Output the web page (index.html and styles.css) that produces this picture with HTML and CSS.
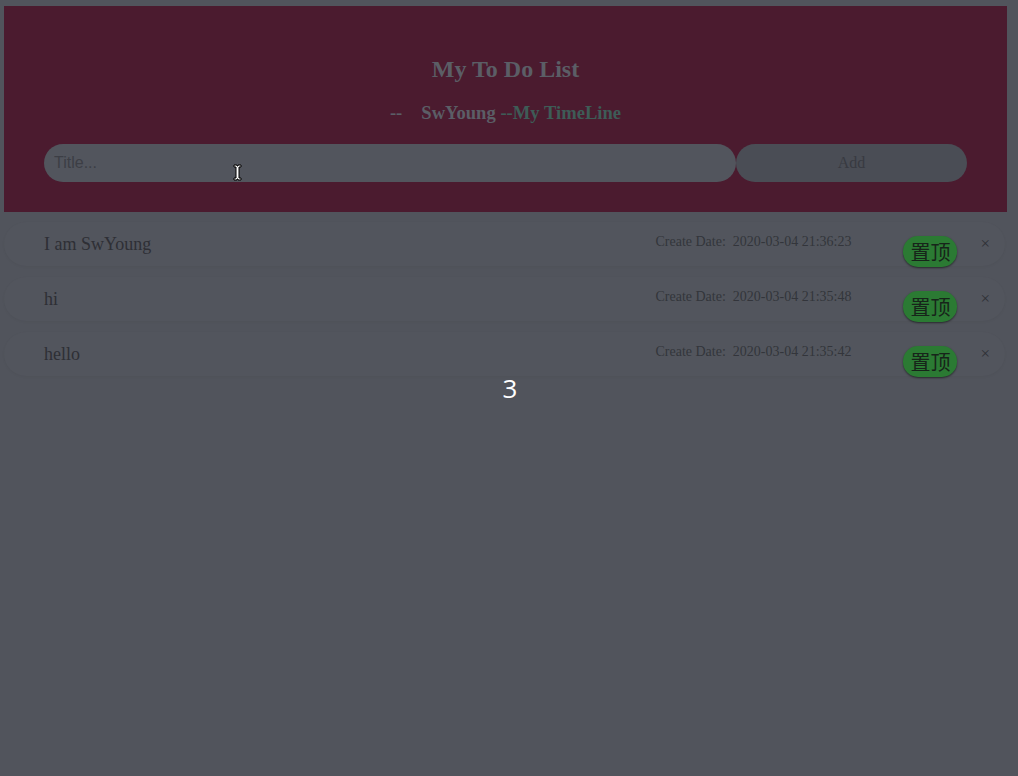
FILE: index.html
```html
<!DOCTYPE html>
<html>
<head>
<meta charset="utf-8">
<link rel="stylesheet" href="styles.css">
</head>
<body>
<div class="page">
  <header class="header">
    <h1 class="title">My To Do List</h1>
    <h3 class="subtitle"><span class="dash">--</span><span class="author">SwYoung</span> <span class="tl">--My TimeLine</span></h3>
    <form class="add-form">
      <div class="input-wrap">
        <input class="title-input" type="text" placeholder="Title...">
        <svg class="cursor" width="9" height="17" viewBox="0 0 9 17"><path d="M1 1h3v1h1V1h3v2H6v11h2v2H5v-1H4v1H1v-2h2V3H1z" fill="#fff" stroke="#000" stroke-width="1"/></svg>
      </div>
      <button class="add-btn" type="button">Add</button>
    </form>
  </header>
  <ul class="list">
    <li class="row">
      <span class="item">I am SwYoung</span>
      <span class="date">Create Date:&nbsp; 2020-03-04 21:36:23</span>
      <button class="top-btn" type="button">置顶</button>
      <span class="close">×</span>
    </li>
    <li class="row">
      <span class="item">hi</span>
      <span class="date">Create Date:&nbsp; 2020-03-04 21:35:48</span>
      <button class="top-btn" type="button">置顶</button>
      <span class="close">×</span>
    </li>
    <li class="row">
      <span class="item">hello</span>
      <span class="date">Create Date:&nbsp; 2020-03-04 21:35:42</span>
      <button class="top-btn" type="button">置顶</button>
      <span class="close">×</span>
    </li>
  </ul>
  <div class="count">3</div>
</div>
</body>
</html>
```
FILE: styles.css
```css
html, body {
  margin: 0;
  padding: 0;
  background: #51545c;
  height: 100%;
}
body {
  font-family: "Liberation Serif", "Times New Roman", serif;
}
.page {
  padding: 6px 11px 0 4px;
}
.header {
  background: #4b1b2f;
  padding: 40px 40px 30px 40px;
  text-align: center;
}
.title {
  margin: 0;
  font-size: 24px;
  line-height: 46px;
  color: #5b5e66;
  font-weight: bold;
}
.subtitle {
  margin: 0;
  font-size: 18.6px;
  line-height: 42px;
  font-weight: bold;
  color: #5b5e66;
}
.subtitle .dash {
  margin-right: 19px;
}
.subtitle .tl {
  color: #3e5c57;
}
.add-form {
  display: flex;
  margin-top: 10px;
  height: 38px;
}
.input-wrap {
  position: relative;
  flex: 1;
  display: flex;
}
.title-input {
  flex: 1;
  border: none;
  outline: none;
  background: #52555d;
  border-radius: 19px;
  padding: 0 10px;
  font-family: "Liberation Sans", Arial, sans-serif;
  font-size: 16px;
  color: #3c3e45;
}
.title-input::placeholder {
  color: #3c3e45;
  opacity: 1;
}
.cursor {
  position: absolute;
  left: 189px;
  top: 20px;
}
.add-btn {
  width: 231px;
  border: none;
  background: #4a4d55;
  border-radius: 19px;
  font-family: "Liberation Serif", serif;
  font-size: 16px;
  color: #383a41;
  padding: 0;
}
.list {
  list-style: none;
  margin: 10px 2px 0 0;
  padding: 0;
  display: flex;
  flex-direction: column;
  gap: 11px;
}
.row {
  display: flex;
  align-items: center;
  height: 44px;
  background: #52555d;
  border-radius: 22px;
  box-shadow: 0 1px 3px rgba(0,0,0,0.04);
  padding: 0 15px 0 40px;
}
.item {
  flex: 1;
  font-size: 18px;
  color: #2e2f35;
}
.date {
  align-self: flex-start;
  margin-top: 12px;
  font-size: 14px;
  color: #33353b;
}
.top-btn {
  align-self: flex-start;
  margin: 14px 0 0 52px;
  width: 54px;
  height: 31px;
  border: none;
  border-radius: 15px;
  background: #2b7a33;
  color: #17241a;
  font-family: "Noto Sans CJK SC", sans-serif;
  font-size: 20px;
  line-height: 31px;
  padding: 0;
  box-shadow: 0 1px 2px rgba(0,0,0,0.5);
}
.close {
  margin-left: 23px;
  font-size: 17px;
  color: #2e3035;
  margin-top: 0;
}
.count {
  text-align: center;
  color: #ffffff;
  font-family: "Open Sans", "DejaVu Sans", sans-serif;
  font-size: 26px;
  line-height: 30px;
  margin-top: -3px;
  padding-left: 9px;
}
```
